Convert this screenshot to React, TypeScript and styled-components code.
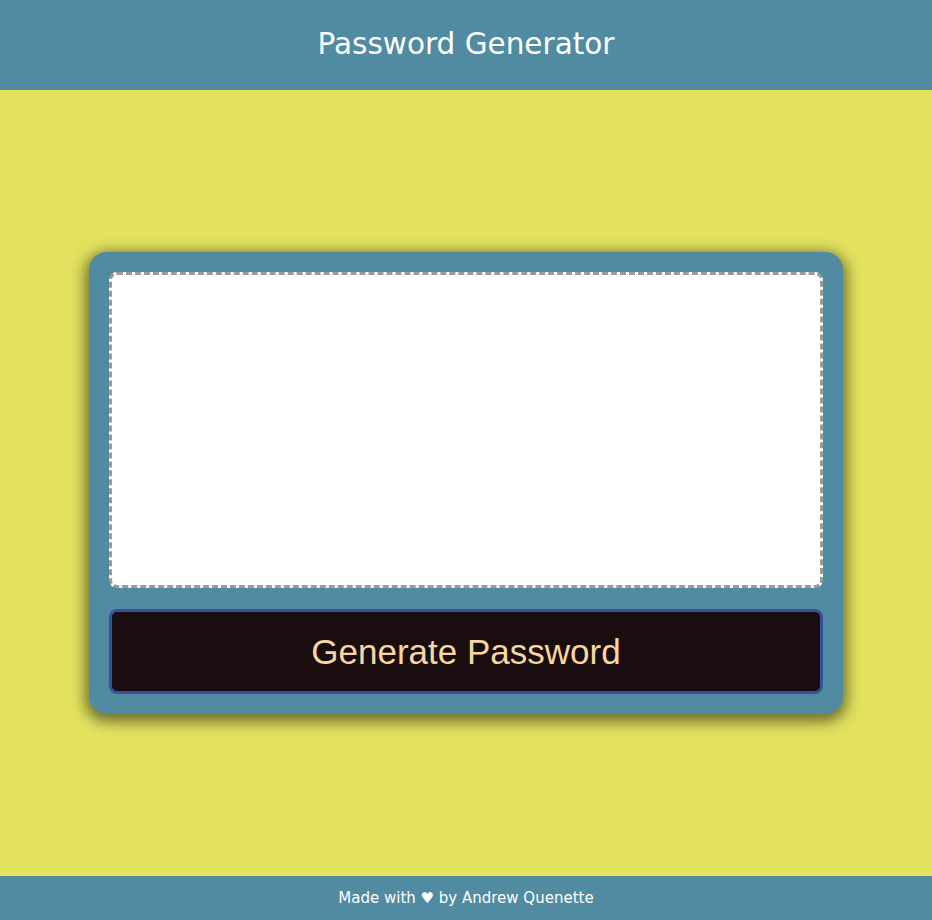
import React from "react";
import styled, { createGlobalStyle } from "styled-components";

const Global = createGlobalStyle`
  html, body { margin: 0; padding: 0; }
  body { background: #e2e25f; font-family: "DejaVu Sans", sans-serif; }
  * { box-sizing: border-box; }
`;

const Page = styled.div`
  display: flex;
  flex-direction: column;
  min-height: 920px;
`;

const Header = styled.header`
  height: 90px;
  background: #508ba1;
  display: flex;
  align-items: center;
  justify-content: center;
  padding-bottom: 3px;
`;

const Title = styled.h1`
  margin: 0;
  color: #ffffff;
  font-family: "DejaVu Sans", sans-serif;
  font-weight: 500;
  font-size: 29.5px;
`;

const Main = styled.main`
  flex: 1;
  display: flex;
  align-items: center;
  justify-content: center;
`;

const Card = styled.div`
  width: 754px;
  background: #508ba1;
  border-radius: 18px;
  padding: 20px;
  display: flex;
  flex-direction: column;
  gap: 21px;
  box-shadow: 0 4px 14px 4px rgba(0, 0, 0, 0.5);
`;

const Output = styled.textarea`
  display: block;
  width: 100%;
  height: 316px;
  background: #ffffff;
  border: 3px dashed #9a9a9a;
  border-radius: 8px;
  resize: none;
  outline: none;
`;

const Button = styled.button`
  height: 85px;
  width: 100%;
  background: #1a0d0f;
  border: 3px solid #3b4f9d;
  border-radius: 8px;
  color: #f7d7a1;
  font-family: "Liberation Sans", Arial, sans-serif;
  font-size: 35px;
  cursor: pointer;
`;

const Footer = styled.footer`
  height: 44px;
  background: #508ba1;
  display: flex;
  align-items: center;
  justify-content: center;
  color: #ffffff;
  font-family: "DejaVu Sans", sans-serif;
  font-size: 15px;
`;

export default function App() {
  return (
    <Page>
      <Global />
      <Header>
        <Title>Password Generator</Title>
      </Header>
      <Main>
        <Card>
          <Output readOnly aria-label="Generated password" />
          <Button>Generate Password</Button>
        </Card>
      </Main>
      <Footer>Made with ♥ by Andrew Quenette</Footer>
    </Page>
  );
}
